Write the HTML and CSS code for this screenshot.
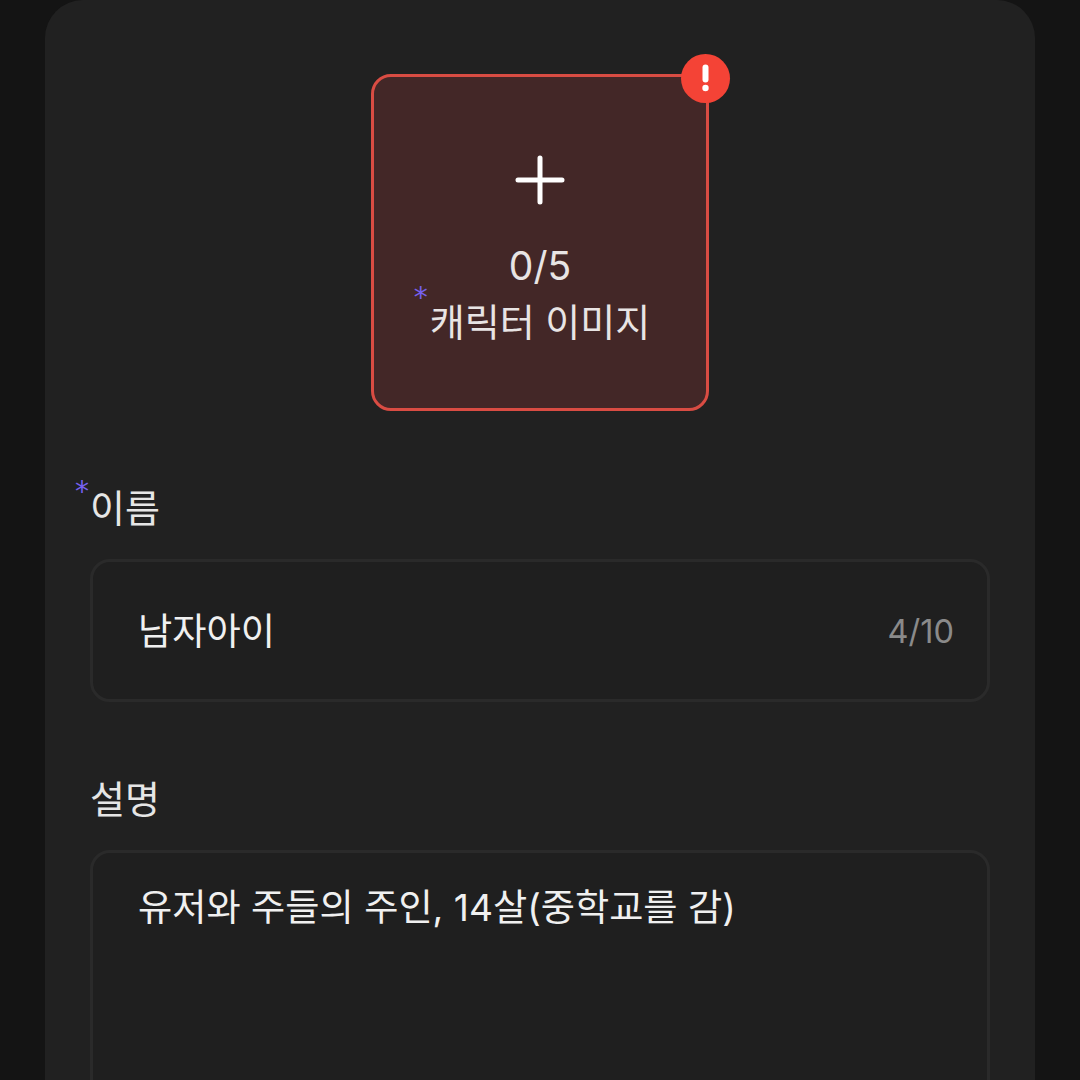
FILE: index.html
```html
<!DOCTYPE html>
<html lang="ko">
<head>
  <meta charset="UTF-8" />
  <meta name="viewport" content="width=device-width, initial-scale=1.0" />
  <title>캐릭터 만들기</title>
  <link rel="stylesheet" href="styles.css">
</head>
<body>
  <main class="card">
    <div class="uploader">
      <span class="badge">
        <svg width="49" height="49" viewBox="0 0 49 49"><rect x="21.5" y="10.5" width="6" height="18" rx="3" fill="#fff"/><circle cx="24.5" cy="34" r="3.2" fill="#fff"/></svg>
      </span>
      <svg class="plus" width="50" height="50" viewBox="0 0 50 50"><path d="M25 3v44M3 25h44" stroke="#fff" stroke-width="5" stroke-linecap="round" fill="none"/></svg>
      <div class="count">0/5</div>
      <div class="upload-label"><span class="req req-upload">*</span>캐릭터 이미지</div>
    </div>

    <section class="field field-name">
      <label class="label"><span class="req">*</span>이름</label>
      <div class="box box-name">
        <span class="value">남자아이</span>
        <span class="counter">4/10</span>
      </div>
    </section>

    <section class="field field-desc">
      <label class="label">설명</label>
      <div class="box box-desc">
        <span class="value">유저와 주들의 주인, 14살(중학교를 감)</span>
      </div>
    </section>
  </main>
</body>
</html>
```

FILE: styles.css
```css
html, body {
  height: 1080px;
  overflow: hidden;
}
body {
  margin: 0;
  background-color: #141414;
  color: #ececec;
  font-family: Inter, "Noto Sans CJK KR", sans-serif;
}
.card {
  box-sizing: border-box;
  width: 990px;
  height: 1080px;
  margin: 0 auto;
  padding: 74px 45px 0;
  background-color: #212121;
  border-radius: 38px 38px 0 0;
  overflow: hidden;
}
.uploader {
  position: relative;
  box-sizing: border-box;
  width: 338px;
  height: 337px;
  margin: 0 auto;
  padding-top: 78px;
  display: flex;
  flex-direction: column;
  align-items: center;
  background-color: #432727;
  border: 3px solid #d94c43;
  border-radius: 20px;
}
.badge {
  position: absolute;
  top: -23px;
  right: -24px;
  width: 49px;
  height: 49px;
  background-color: #f44336;
  border-radius: 50%;
}
.badge svg {
  display: block;
}
.plus {
  display: block;
}
.count {
  margin-top: 36px;
  font-size: 39px;
  line-height: 50px;
  color: #e8e4e4;
}
.upload-label {
  position: relative;
  margin-top: 6px;
  font-size: 38px;
  line-height: 50px;
  color: #e8e4e4;
}
.req {
  position: absolute;
  left: -15px;
  top: -7px;
  font-family: "DejaVu Sans", sans-serif;
  font-size: 28px;
  line-height: 32px;
  color: #7660ee;
}
.req-upload {
  left: -16px;
  top: -15px;
}
.field-name {
  margin-top: 72px;
}
.field-desc {
  margin-top: 72px;
}
.label {
  position: relative;
  display: block;
  font-size: 38px;
  line-height: 50px;
  color: #e6e6e6;
}
.box {
  box-sizing: border-box;
  display: flex;
  justify-content: space-between;
  margin-top: 26px;
  padding: 0 33px 0 45px;
  background-color: #1f1f1f;
  border: 3px solid #2a2a2a;
  border-radius: 20px;
}
.box-name {
  height: 143px;
  align-items: center;
}
.box-desc {
  height: 400px;
  padding-top: 30px;
  align-items: flex-start;
}
.value {
  font-size: 37.2px;
  line-height: 50px;
  color: #f0f0f0;
}
.box-name .value, .counter {
  margin-top: 2px;
}
.counter {
  font-size: 32.5px;
  color: #8a8a8a;
}
```
